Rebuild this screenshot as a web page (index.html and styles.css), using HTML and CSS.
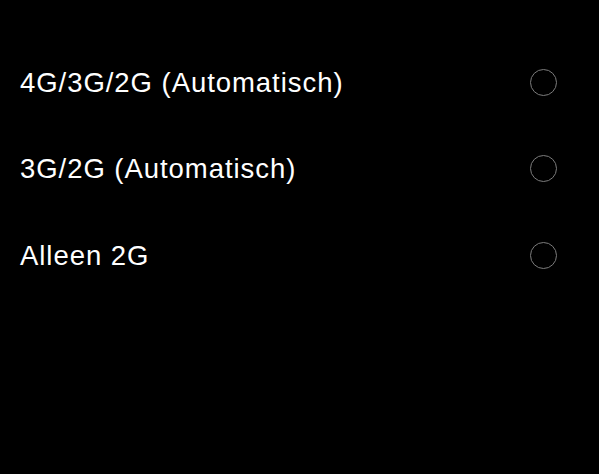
FILE: index.html
```html
<!DOCTYPE html>
<html>
<head>
<meta charset="utf-8">
<link rel="stylesheet" href="styles.css">
</head>
<body>
<div class="list">
  <div class="row"><span class="label">4G/3G/2G (Automatisch)</span><span class="radio"></span></div>
  <div class="row"><span class="label">3G/2G (Automatisch)</span><span class="radio"></span></div>
  <div class="row"><span class="label">Alleen 2G</span><span class="radio"></span></div>
</div>
</body>
</html>
```
FILE: styles.css
```css
html, body {
  margin: 0;
  background: #000;
  height: 100%;
}
body {
  font-family: "Liberation Sans", Arial, sans-serif;
  color: #fff;
}
.list {
  padding-top: 39px;
  display: flex;
  flex-direction: column;
}
.row {
  height: 86.5px;
  display: flex;
  align-items: center;
  justify-content: space-between;
  padding: 0 42px 0 20px;
}
.label {
  font-size: 27.5px;
  letter-spacing: 0.95px;
  line-height: 1;
}
.radio {
  width: 25px;
  height: 25px;
  border: 1.8px solid #7c7c7c;
  border-radius: 50%;
}
```
